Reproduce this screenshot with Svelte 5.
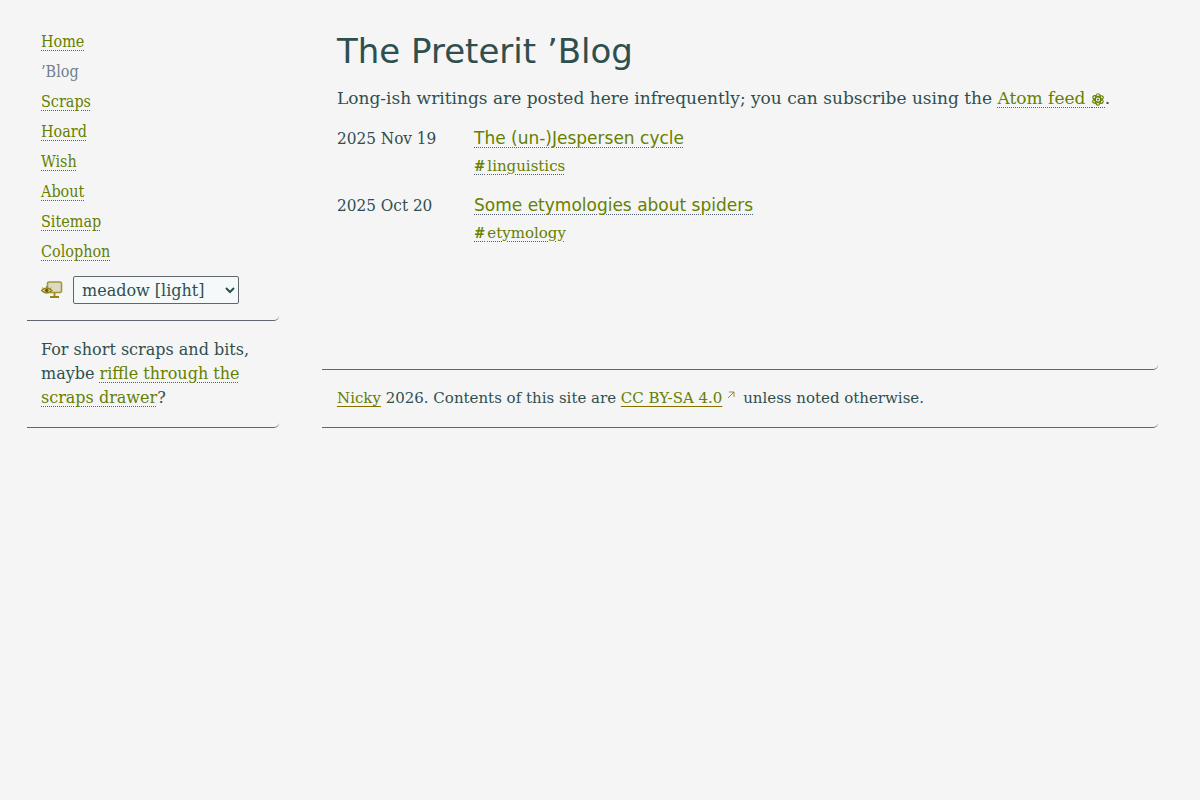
<script lang="ts">
  interface Post {
    date: string;
    title: string;
    tag: string;
  }

  const pages = ["Home", "’Blog", "Scraps", "Hoard", "Wish", "About", "Sitemap", "Colophon"];
  const current = "’Blog";

  const posts: Post[] = [
    { date: "2025 Nov 19", title: "The (un-)Jespersen cycle", tag: "linguistics" },
    { date: "2025 Oct 20", title: "Some etymologies about spiders", tag: "etymology" }
  ];

  const themes = ["meadow [light]", "forest [dark]"];
  let theme = $state(themes[0]);
</script>

<div class="page">
  <div class="sidebar">
    <nav>
      <ul>
        {#each pages as page}
          <li>
            {#if page === current}
              <span class="current" aria-current="page">{page}</span>
            {:else}
              <a href="#{page.toLowerCase()}">{page}</a>
            {/if}
          </li>
        {/each}
      </ul>
      <div class="theme">
        <label for="theme-select" aria-label="Theme">
          <svg class="screen" viewBox="0 0 22 18" aria-hidden="true">
            <rect x="6.5" y="1" width="14" height="10.5" rx="1.5" fill="#dcd9c4" stroke="#a3963a" stroke-width="1.6" />
            <path d="M13.5 12v4M9 16h9" fill="none" stroke="#93851c" stroke-width="1.8" />
            <path d="M0.5 9.5Q5.5 4.5 11 9.5Q5.5 14.5 0.5 9.5Z" fill="#d0c98f" stroke="#93851c" stroke-width="1.3" />
            <circle cx="5.7" cy="9.5" r="1.8" fill="#6b6100" />
            <path d="M1.5 6.5l1 1.5M5.7 5v1.5M10 6.5l-1 1.5" stroke="#93851c" />
          </svg>
        </label>
        <select id="theme-select" bind:value={theme}>
          {#each themes as name}
            <option value={name}>{name}</option>
          {/each}
        </select>
      </div>
    </nav>
    <aside>
      <p>For short scraps and bits, maybe <a href="#scraps">riffle through the scraps drawer</a>?</p>
    </aside>
  </div>

  <div class="content">
    <main>
      <h1>The Preterit ’Blog</h1>
      <p class="intro">
        Long-ish writings are posted here infrequently; you can subscribe using the
        <a href="#feed">Atom feed <svg class="atom" viewBox="0 0 14 14" aria-hidden="true">
            <g fill="none" stroke="currentColor" stroke-width="1.3">
              <ellipse cx="7" cy="7" rx="2.8" ry="6.2" />
              <ellipse cx="7" cy="7" rx="2.8" ry="6.2" transform="rotate(60 7 7)" />
              <ellipse cx="7" cy="7" rx="2.8" ry="6.2" transform="rotate(120 7 7)" />
            </g>
            <circle cx="7" cy="7" r="1.2" fill="currentColor" />
          </svg></a>.
      </p>
      <dl>
        {#each posts as post}
          <dt>{post.date}</dt>
          <dd>
            <a class="title" href="#post">{post.title}</a>
            <a class="tag" href="#{post.tag}"><b>#</b>{post.tag}</a>
          </dd>
        {/each}
      </dl>
    </main>
    <footer>
      <a href="#nicky">Nicky</a> 2026. Contents of this site are
      <a href="#license">CC BY-SA 4.0</a><svg class="arrow" viewBox="0 0 8 8" aria-hidden="true">
        <path d="M1 7L7 1M2 1h5v5" fill="none" stroke="#877000" stroke-width=".8" />
      </svg>
      unless noted otherwise.
    </footer>
  </div>
</div>

<style>
:global(body) {
  margin: 0;
  background: #f5f5f5;
}

.page {
  display: grid;
  grid-template-columns: 63fr 209fr;
  gap: 43px;
  padding: 27px 42px 27px 27px;
  color: #2f4f4f;
  font: 15px/24px "DejaVu Serif", serif;
}

.sidebar,
.content {
  display: flex;
  flex-direction: column;
}

.sidebar {
  font-size: 16px;
}

nav,
aside,
main,
footer {
  border-bottom: 1px solid #60666d;
  border-bottom-right-radius: 5px;
}

nav {
  padding: 0 14px 16px;
}

ul {
  margin: 0;
  padding: 0;
  list-style: none;
}

li {
  font-family: "DejaVu Serif Condensed", "DejaVu Serif", serif;
  line-height: 30px;
}

.current {
  color: #708090;
}

a {
  color: #668000;
  text-decoration: underline dotted #526078 1px;
  text-underline-offset: 3px;
}

.theme {
  display: flex;
  align-items: center;
  gap: 10px;
  padding-top: 9px;
}

.theme label {
  display: flex;
}

.screen {
  width: 22px;
  height: 18px;
}

select {
  width: 166px;
  height: 28px;
  padding: 0 4px;
  border: 1px solid #60666d;
  border-radius: 2px;
  background: #f5f9f9;
  color: #2f4f4f;
  font: inherit;
}

aside {
  padding: 17px 14px;
}

p {
  margin: 0;
}

main {
  flex: 1;
  padding: 0 15px;
}

h1 {
  margin: 0;
  font: 34px/48px "DejaVu Sans", sans-serif;
}

.intro {
  padding: 8px 0 11px;
  font-size: 17px;
  line-height: 30px;
}

dl {
  display: grid;
  grid-template-columns: 17% 1fr;
  row-gap: 11px;
  margin: 0;
  font-size: 17px;
  line-height: 28px;
}

dt {
  font-family: "DejaVu Serif Condensed", "DejaVu Serif", serif;
}

dd {
  display: flex;
  flex-direction: column;
  align-items: flex-start;
  margin: 0;
}

.title {
  font-family: "DejaVu Sans", sans-serif;
}

.tag {
  font-size: 15px;
}

.tag b {
  margin-right: 2px;
  font-family: "DejaVu Serif Condensed", "DejaVu Serif", serif;
}

.atom {
  width: 14px;
  height: 13px;
  padding-bottom: 1px;
  border-bottom: 1px dotted #526078;
  vertical-align: -4px;
}

footer {
  padding: 16px 15px 17px;
}

footer a {
  text-decoration: underline solid #877000 1px;
}

.arrow {
  width: 8px;
  height: 8px;
  margin: 0 3px 0 5px;
  vertical-align: 4px;
}
</style>
